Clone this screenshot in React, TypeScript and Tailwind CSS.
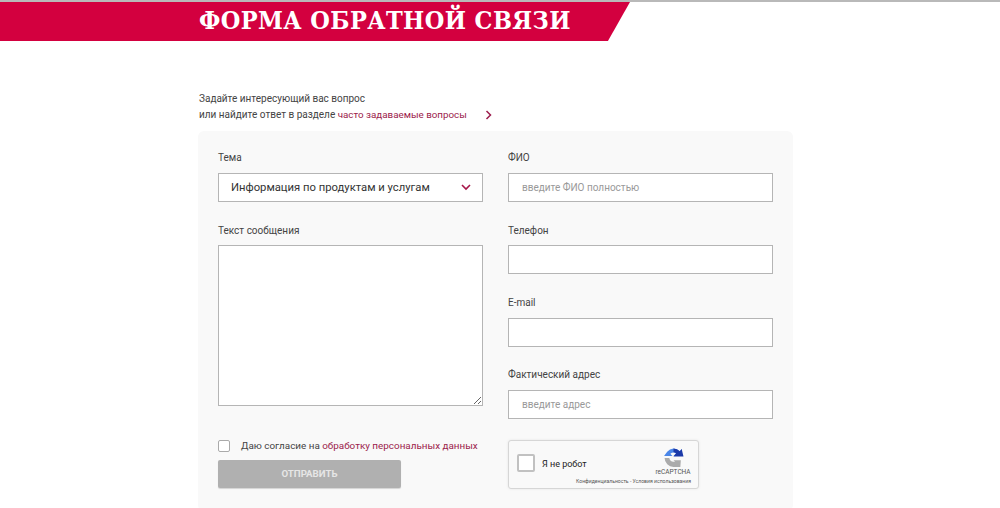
import React from "react"

const labelClass = "block text-[10px] leading-[14px] text-[#444]"
const inputClass =
	"block h-[29px] w-full border border-[#b5b5b5] bg-white px-[13px] text-[10px] text-[#333] outline-none placeholder:text-[#999]"

const Field = ({ label, placeholder, className, inputGap = "mt-[8px]" }: { label: string; placeholder?: string; className: string; inputGap?: string }) => (
	<div className={className}>
		<label className={labelClass}>{label}</label>
		<input className={`${inputGap} ${inputClass}`} placeholder={placeholder} />
	</div>
)

const RecaptchaLogo = () => (
	<svg width="21" height="21" viewBox="0 0 20 20" fill="none">
		<path d="M4 4.500A8.500 8.500 0 0 1 10 1.500a8.500 8.500 0 0 1 6 2.500l1.800-2v6.500H10l2.500-2.500A4.500 4.500 0 0 0 7 6.500L9 8.500H1Z" fill="#4a86e8" />
		<path d="M10 1.500a8.500 8.500 0 0 1 6 2.500l1.800-2.200L19.500 9H10l2.500-3A4.500 4.500 0 0 0 10 5Z" fill="#1c3aa9" />
		<path d="M1.500 10.500H6a4.200 4.200 0 0 0 4 3.500h1.500l-1.500-1.500h7L16.500 19h-6.500A8.700 8.700 0 0 1 1.500 10.500Z" fill="#ababab" />
	</svg>
)

const App = () => {
	return (
		<main className="h-[508px] w-[1000px] overflow-hidden bg-white font-['Roboto','Liberation_Sans',sans-serif]">
			<div className="h-[2px] w-full bg-[#b9b9b9]" />
			<div className="h-[39px] w-[630px] bg-[#d3003f] pl-[199px] [clip-path:polygon(0_0,100%_0,96.500%_100%,0_100%)]">
				<h1 className="font-['DejaVu_Serif',serif] text-[25px] font-bold leading-[38px] tracking-[0.4px] whitespace-nowrap text-white [font-stretch:condensed]">
					ФОРМА ОБРАТНОЙ СВЯЗИ
				</h1>
			</div>

			<div className="ml-[199px] mt-[50px] text-[10px] leading-[16px] text-[#444]">
				<p>Задайте интересующий вас вопрос</p>
				<p className="flex items-center">
					или найдите ответ в разделе&nbsp;
					<a className="text-[9.800px] text-[#9c1c4c]">часто задаваемые вопросы</a>
					<svg className="ml-[18px]" width="7" height="10" viewBox="0 0 7 10" fill="none">
						<path d="M1.500 1 5.500 5 1.500 9" stroke="#9c1c4c" strokeWidth="1.500" />
					</svg>
				</p>
			</div>

			<section className="ml-[198px] mt-[8px] h-[380px] w-[595px] rounded-[6px] bg-[#f9f9f9] px-[20px] pt-[20px]">
				<div className="flex gap-[25px]">
					<div className="w-[265px]">
						<label className={labelClass}>Тема</label>
						<div className="mt-[8px] flex h-[29px] items-center justify-between border border-[#b5b5b5] bg-white pl-[12px] pr-[11px] text-[11.250px] text-[#333]">
							<span className="pt-[2px]">Информация по продуктам и услугам</span>
							<svg width="10" height="7" viewBox="0 0 10 7" fill="none">
								<path d="M1 1 5 5 9 1" stroke="#a6174a" strokeWidth="1.600" />
							</svg>
						</div>
						<label className={`mt-[22px] ${labelClass}`}>Текст сообщения</label>
						<textarea className="mt-[7px] block h-[161px] w-full border border-[#b5b5b5] bg-white outline-none" />
						<div className="mt-[33px] flex items-center">
							<span className="h-[12px] w-[12px] shrink-0 rounded-[2px] border border-[#aaa] bg-white" />
							<span className="ml-[11px] text-[9.900px] leading-[14px] whitespace-nowrap text-[#444]">
								Даю согласие на <a className="text-[#9c1c4c]">обработку персональных данных</a>
							</span>
						</div>
						<button className="mt-[7px] block h-[28px] w-[183px] rounded-[2px] bg-[#b0b0b0] text-[9.700px] font-bold text-[#e6e6e6] shadow-[0_1px_1px_rgba(0,0,0,0.15)]">
							ОТПРАВИТЬ
						</button>
					</div>
					<div className="w-[265px]">
						<Field label="ФИО" placeholder="введите ФИО полностью" className="" />
						<Field label="Телефон" className="mt-[22px]" inputGap="mt-[7px]" />
						<Field label="E-mail" className="mt-[22px]" />
						<Field label="Фактический адрес" placeholder="введите адрес" className="mt-[21px]" />
						<div className="relative mt-[21px] flex h-[49px] w-[191px] rounded-[3px] border border-[#d6d6d6] bg-[#f9f9f9] shadow-[0_0_3px_rgba(0,0,0,0.08)]">
							<span className="ml-[8px] mt-[13px] h-[18px] w-[18px] shrink-0 rounded-[2px] border-2 border-[#c1c1c1] bg-white" />
							<span className="ml-[7px] mt-[17px] text-[9px] leading-[12px] whitespace-nowrap text-[#222]">Я не робот</span>
							<div className="ml-auto mr-[8px] mt-[6px] flex w-[34px] flex-col items-center">
								<RecaptchaLogo />
								<span className="text-[6.500px] leading-[8px] text-[#555]">reCAPTCHA</span>
							</div>
							<span className="absolute bottom-[3px] right-[7px] text-[5.100px] leading-[7px] whitespace-nowrap text-[#555]">
								Конфиденциальность - Условия использования
							</span>
						</div>
					</div>
				</div>
			</section>
		</main>
	)
}

export default App
